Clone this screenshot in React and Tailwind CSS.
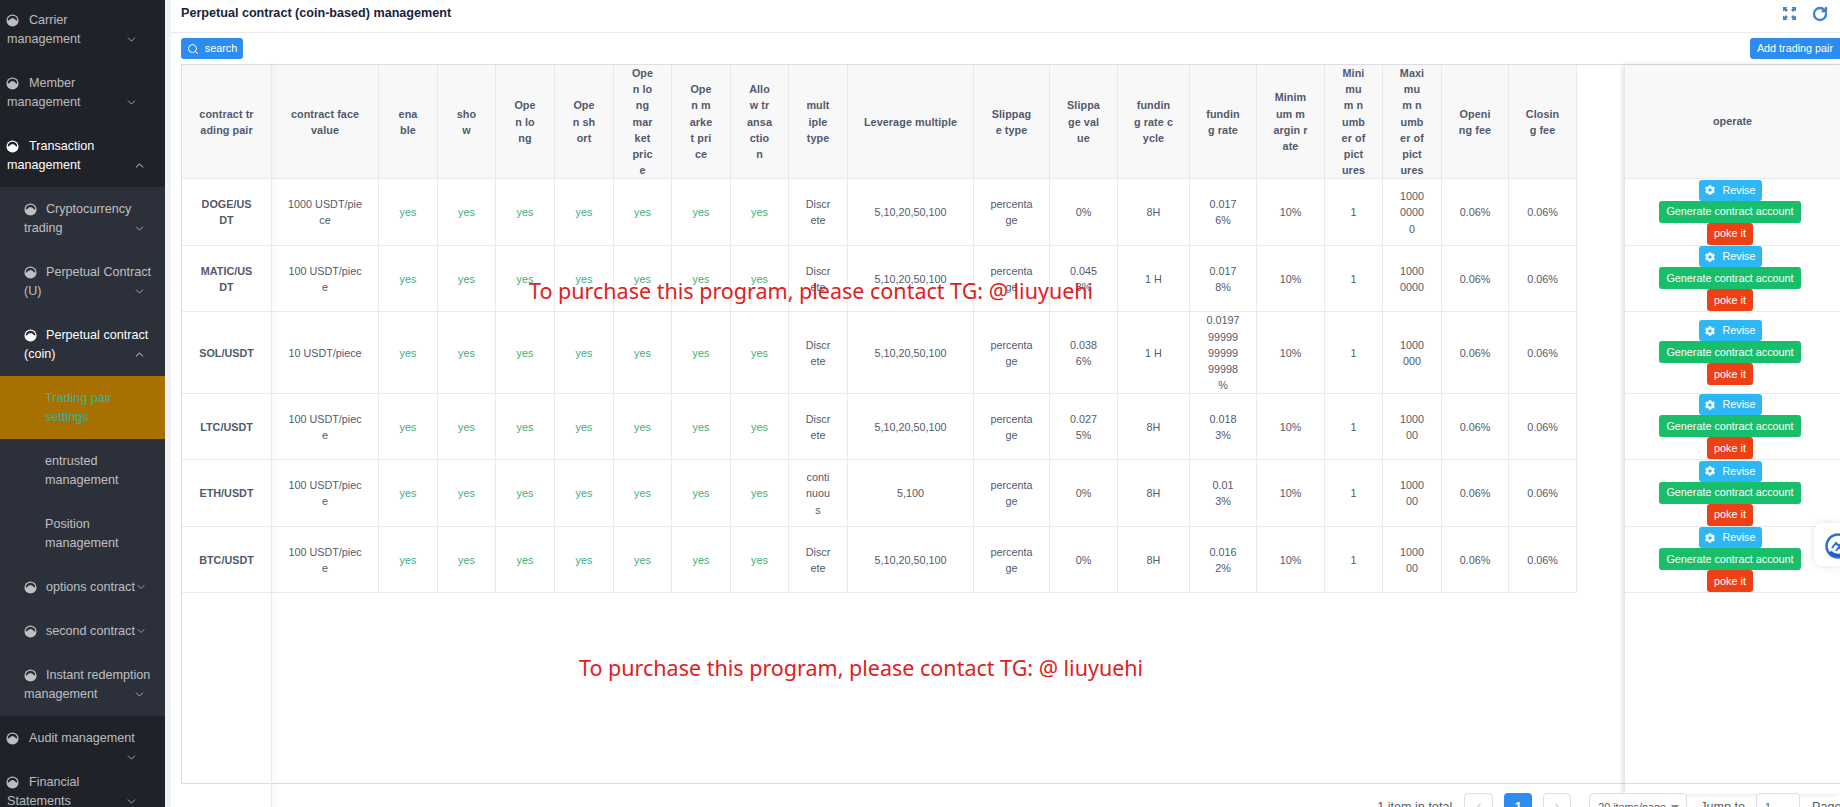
import React from "react"
import { ChevronDown, ChevronUp, ChevronLeft, ChevronRight, RotateCw, Search } from "lucide-react"
import { IoMdSettings } from "react-icons/io"

const menu = [
  { level: 1, lines: ["Carrier", "management"], h: "h-[63px]" },
  { level: 1, lines: ["Member", "management"], h: "h-[63px]" },
  { level: 1, lines: ["Transaction", "management"], h: "h-[63px]", open: true },
  { level: 2, lines: ["Cryptocurrency", "trading"], h: "h-[63px]" },
  { level: 2, lines: ["Perpetual Contract", "(U)"], h: "h-[63px]" },
  { level: 2, lines: ["Perpetual contract", "(coin)"], h: "h-[63px]", open: true },
  { level: 3, lines: ["Trading pair", "settings"], active: true },
  { level: 3, lines: ["entrusted", "management"] },
  { level: 3, lines: ["Position", "management"] },
  { level: 2, lines: ["options contract"], h: "h-[44px]", inline: true },
  { level: 2, lines: ["second contract"], h: "h-[44px]", inline: true },
  { level: 2, lines: ["Instant redemption", "management"], h: "h-[63px]" },
  { level: 1, lines: ["Audit management", ""], h: "h-[44px]" },
  { level: 1, lines: ["Financial", "Statements"], h: "h-[63px]" },
]

const columns = [
  ["w-[90px]", "contract trading pair"],
  ["w-[107px]", "contract face value"],
  ["w-[59px]", "enable"],
  ["w-[58px]", "show"],
  ["w-[59px]", "Open long"],
  ["w-[59px]", "Open short"],
  ["w-[58px]", "Open long market price"],
  ["w-[59px]", "Open market price"],
  ["w-[58px]", "Allow transaction", "px-[16.02px]"],
  ["w-[59px]", "multiple type"],
  ["w-[126px]", "Leverage multiple", "px-[15px]"],
  ["w-[76px]", "Slippage type"],
  ["w-[68px]", "Slippage value"],
  ["w-[72px]", "funding rate cycle", "px-[15.8px]"],
  ["w-[67px]", "funding rate", "px-[14.5px]"],
  ["w-[68px]", "Minimum margin rate"],
  ["w-[58px]", "Minimum number of pictures"],
  ["w-[59px]", "Maximum number of pictures"],
  ["w-[67px]", "Opening fee"],
  ["w-[68px]", "Closing fee"],
]

const rows = [
  { h: "h-[67px]", pair: "DOGE/USDT", face: "1000 USDT/piece", type: "Discrete", lev: "5,10,20,50,100", slip: "0%", cycle: "8H", rate: "0.0176%", max: "100000000" },
  { h: "h-[66px]", pair: "MATIC/USDT", face: "100 USDT/piece", type: "Discrete", lev: "5,10,20,50,100", slip: "0.0453%", cycle: "1 H", rate: "0.0178%", max: "10000000" },
  { h: "h-[82px]", pair: "SOL/USDT", face: "10 USDT/piece", type: "Discrete", lev: "5,10,20,50,100", slip: "0.0386%", cycle: "1 H", rate: <>0.0197999999999999998<wbr />%</>, max: "1000000" },
  { h: "h-[66px]", pair: "LTC/USDT", face: "100 USDT/piece", type: "Discrete", lev: "5,10,20,50,100", slip: "0.0275%", cycle: "8H", rate: "0.0183%", max: "100000" },
  { h: "h-[67px]", pair: "ETH/USDT", face: "100 USDT/piece", type: "continuous", lev: "5,100", slip: "0%", cycle: "8H", rate: "0.013%", max: "100000" },
  { h: "h-[66px]", pair: "BTC/USDT", face: "100 USDT/piece", type: "Discrete", lev: "5,10,20,50,100", slip: "0%", cycle: "8H", rate: "0.0162%", max: "100000" },
]

const MenuIcon = ({ bg }) => (
  <svg width="13" height="13" viewBox="0 0 14 14" className="shrink-0">
    <circle cx="7" cy="7" r="6.5" fill="currentColor" />
    <path d="M1.8 7a5.2 5.2 0 0 1 10.4 0c-1 .2-1.7-.2-2.3-1-.7-1-1.6-1.5-2.9-1.5S4.800 5 4.100 6c-.6.800-1.300 1.200-2.300 1z" fill={bg} />
  </svg>
)

const MenuItem = ({ item }) => {
  if (item.level === 3) {
    return (
      <div className={`h-[63px] pl-[45px] pt-[12.5px] leading-[19.3px] ${item.active ? "bg-[#a87000] text-[#35b59c]" : "text-white/70"}`}>
        <div>{item.lines[0]}</div>
        <div>{item.lines[1]}</div>
      </div>
    )
  }
  const sub = item.level === 2
  const bg = sub ? "#2c303a" : "#20222a"
  const color = item.open ? "text-white" : "text-white/70"
  const Chevron = item.open ? ChevronUp : ChevronDown
  const right = sub || item.open ? "pr-[19px]" : "pr-[27px]"

  if (item.inline) {
    return (
      <div className={`${item.h} flex items-center pl-[24px] ${color}`}>
        <MenuIcon bg={bg} />
        <span className="ml-[9px]">{item.lines[0]}</span>
        <ChevronDown size={12} strokeWidth={1.5} />
      </div>
    )
  }
  return (
    <div className={`${item.h} pt-[12.5px] leading-[19.3px] ${sub ? "pl-[24px]" : "pl-[7px]"} ${color}`}>
      <div className={`flex items-center whitespace-nowrap ${sub ? "" : "-ml-px"}`}>
        <MenuIcon bg={bg} />
        <span className={sub ? "ml-[9px]" : "ml-[10px]"}>{item.lines[0]}</span>
      </div>
      <div className={`flex items-center justify-between h-[19px] ${right}`}>
        <span>{item.lines[1]}</span>
        <Chevron size={13} strokeWidth={1.5} />
      </div>
    </div>
  )
}

const Sidebar = () => (
  <aside className="w-[165px] shrink-0 h-full overflow-hidden bg-[#20222a] text-[12.6px]">
    <div className="-mt-[2px]">
      {menu.slice(0, 3).map((item, i) => <MenuItem key={i} item={item} />)}
      <div className="bg-[#2c303a]">
        {menu.slice(3, 12).map((item, i) => <MenuItem key={i} item={item} />)}
      </div>
      {menu.slice(12).map((item, i) => <MenuItem key={i} item={item} />)}
    </div>
  </aside>
)

const Yes = () => <span className="text-[#3fae78]">yes</span>

const Cell = ({ children, bold }) => (
  <td className={`border-r border-b border-[#e8eaec] px-[16px] text-center break-all ${bold ? "font-bold" : ""}`}>
    {children}
  </td>
)

const ExpandIcon = () => (
  <svg width="13" height="13" viewBox="0 0 13 13" fill="#3b82d6">
    <path d="M0 0h4.500L3.200 1.300l1.700 1.700-1.900 1.900L1.300 3.200 0 4.500zM13 0v4.500l-1.300-1.300L10 4.900 8.100 3l1.700-1.700L8.500 0zM0 13V8.500l1.300 1.300L3 8.100 4.900 10l-1.700 1.700L4.500 13zM13 13H8.500l1.300-1.300L8.100 10 10 8.100l1.700 1.700L13 8.500z" />
  </svg>
)

const FloatLogo = () => (
  <svg width="26" height="26" viewBox="0 0 26 26" fill="none">
    <circle cx="13" cy="13" r="11.500" stroke="#2f6fd8" strokeWidth="2.500" />
    <path d="M5 19a11 11 0 0 0 16 0" stroke="#1d5fd0" strokeWidth="3.500" />
    <path d="M7 15l4-5 3 3 4-5M11 18l3-4 3 3 4-4" stroke="#2f6fd8" strokeWidth="2" />
  </svg>
)

const App = () => {
  return (
    <div className="relative w-[1840px] h-[807px] overflow-hidden flex bg-[#f0f2f5] font-['Liberation_Sans',Arial,sans-serif]">
      <Sidebar />

      <main className="ml-[6px] flex-1 min-w-0 bg-white flex flex-col">
        {/* title bar */}
        <div className="h-[33px] shrink-0 border-b border-[#e8eaec] pl-[10px] pr-[12px] pt-[3px] flex justify-between">
          <h1 className="text-[12.6px] leading-[20px] font-bold text-[#17233d]">Perpetual contract (coin-based) management</h1>
          <div className="flex items-start gap-[16px] text-[#3b82d6]">
            <span className="mt-[4px]"><ExpandIcon /></span>
            <RotateCw size={16} strokeWidth={3.5} className="mt-[3px]" />
          </div>
        </div>

        {/* toolbar */}
        <div className="mt-[5px] mb-[5px] h-[21px] shrink-0 pl-[10px] flex justify-between">
          <button className="w-[62px] h-[21px] rounded-[3px] bg-[#2d8cf0] text-white text-[10.8px] font-medium flex items-center justify-center gap-[6px]">
            <Search size={12} strokeWidth={2} />
            search
          </button>
          <button className="w-[90px] h-[21px] rounded-l-[3px] bg-[#2d8cf0] text-white text-[10.8px] font-medium">Add trading pair</button>
        </div>

        {/* table */}
        <div className="relative ml-[10px] h-[720px] shrink-0 flex items-start border-t border-b border-[#dcdee2] text-[10.8px] leading-[16.2px] text-[#515a6e]">
          <div className="w-[1444px] shrink-0 h-full border-l border-[#dcdee2]">
            <table className="table-fixed w-[1395px] border-separate border-spacing-0">
              <colgroup>
                {columns.map(([w], i) => <col key={i} className={w} />)}
              </colgroup>
              <thead>
                <tr className="h-[114px]">
                  {columns.map(([, label, pad], i) => (
                    <th key={i} className={`bg-[#f8f8f9] border-r border-b border-[#e8eaec] ${pad || "px-[16.35px]"} tracking-[0.08px] text-center font-bold break-all`}>{label}</th>
                  ))}
                </tr>
              </thead>
              <tbody>
                {rows.map((r) => (
                  <tr key={r.pair} className={r.h}>
                    <Cell bold>{r.pair}</Cell>
                    <Cell>{r.face}</Cell>
                    <Cell><Yes /></Cell>
                    <Cell><Yes /></Cell>
                    <Cell><Yes /></Cell>
                    <Cell><Yes /></Cell>
                    <Cell><Yes /></Cell>
                    <Cell><Yes /></Cell>
                    <Cell><Yes /></Cell>
                    <Cell>{r.type}</Cell>
                    <Cell>{r.lev}</Cell>
                    <Cell>percentage</Cell>
                    <Cell>{r.slip}</Cell>
                    <Cell>{r.cycle}</Cell>
                    <Cell>{r.rate}</Cell>
                    <Cell>10%</Cell>
                    <Cell>1</Cell>
                    <Cell>{r.max}</Cell>
                    <Cell>0.06%</Cell>
                    <Cell>0.06%</Cell>
                  </tr>
                ))}
              </tbody>
            </table>
          </div>

          {/* left fixed column shadow */}
          <div className="absolute left-[90px] top-0 h-[743px] w-px bg-[#e8eaec] shadow-[2px_0_5px_0_rgba(0,0,0,0.12)]" />

          {/* right fixed column */}
          <div className="w-[215px] shrink-0 h-[729px] shadow-[-2px_0_5px_0_rgba(0,0,0,0.14)]">
            <div className="h-[114px] bg-[#f8f8f9] border-b border-[#e8eaec] flex items-center justify-center font-bold">operate</div>
            {rows.map((r) => (
              <div key={r.pair} className={`${r.h} bg-white border-b border-[#e8eaec] pr-[5px] flex flex-col items-center justify-center text-white`}>
                <button className="w-[63px] h-[21px] shrink-0 rounded-[3px] bg-[#2db7f5] flex items-center justify-center gap-[6px] font-medium">
                  <IoMdSettings size={12} />
                  Revise
                </button>
                <button className="w-[142px] h-[22px] shrink-0 rounded-[3px] bg-[#19be6b] font-medium">Generate contract account</button>
                <button className="w-[46px] h-[22px] shrink-0 rounded-[3px] bg-[#ed4014] font-medium">poke it</button>
              </div>
            ))}
          </div>
        </div>

        {/* pagination */}
        <div className="relative z-10 mt-[9px] -mr-[4px] flex justify-end items-center text-[12.6px] text-[#515a6e] whitespace-nowrap">
          <span className="mr-[12px]">1 item in total</span>
          <span className="w-[29px] h-[29px] rounded-[4px] border border-[#dcdee2] bg-white flex items-center justify-center text-[#c5c8ce]"><ChevronLeft size={13} /></span>
          <span className="ml-[11px] w-[28px] h-[29px] rounded-[4px] bg-[#2d8cf0] text-white font-bold flex items-center justify-center">1</span>
          <span className="ml-[11px] w-[28px] h-[29px] rounded-[4px] border border-[#dcdee2] bg-white flex items-center justify-center text-[#c5c8ce]"><ChevronRight size={13} /></span>
          <span className="ml-[18px] w-[98px] h-[29px] rounded-[4px] border border-[#dcdee2] bg-white pl-[8px] pr-[7px] flex items-center justify-between text-[10.8px]">
            20 items/page
            <span className="w-0 h-0 border-x-[4px] border-x-transparent border-t-[5px] border-t-[#808695]" />
          </span>
          <span className="ml-[13px]">Jump to</span>
          <span className="ml-[11px] w-[44px] h-[29px] rounded-[4px] border border-[#dcdee2] bg-white pl-[8px] flex items-center text-[10.8px]">1</span>
          <span className="ml-[12px] w-[32px]">Page</span>
        </div>
      </main>

      {/* watermark text laid over the page */}
      <div className="absolute left-[529px] top-[277px] text-[21.5px] leading-[28px] text-[#e0201c] whitespace-nowrap font-['Noto_Sans',sans-serif]">To purchase this program, please contact TG: @ liuyuehi</div>
      <div className="absolute left-[579px] top-[654px] text-[21.5px] leading-[28px] text-[#e0201c] whitespace-nowrap font-['Noto_Sans',sans-serif]">To purchase this program, please contact TG: @ liuyuehi</div>

      {/* floating widget */}
      <div className="absolute right-0 top-[523px] w-[26px] h-[43px] bg-white rounded-l-[8px] shadow-[0_0_8px_rgba(0,0,0,0.12)] overflow-hidden pl-[11px] pt-[10px]">
        <FloatLogo />
      </div>
    </div>
  )
}

export default App
